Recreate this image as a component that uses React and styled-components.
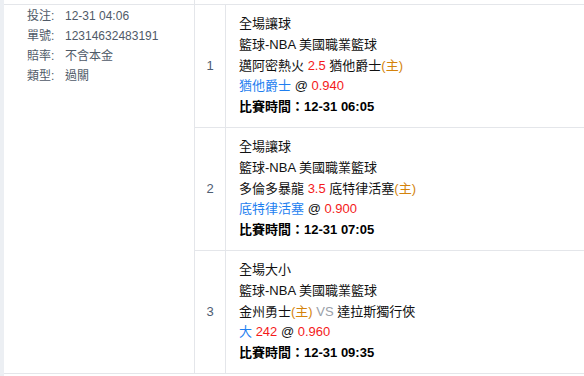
import React from "react";
import styled, { createGlobalStyle } from "styled-components";

const Global = createGlobalStyle`
  html, body { margin: 0; padding: 0; }
  body {
    background: #eceff3;
    font-family: "Liberation Sans", "Noto Sans CJK TC", sans-serif;
  }
`;

const LINE = "#e4e6ea";

const Page = styled.div`
  margin-left: 4px;
  background: #fff;
  min-height: 376px;
`;

const Stub = styled.div`
  display: grid;
  grid-template-columns: 191px 1fr;
  height: 4px;
`;

const StubCell = styled.div`
  border-right: 1px solid ${LINE};
`;

const Table = styled.div`
  display: grid;
  grid-template-columns: 191px 31px 1fr;
  border-top: 1px solid ${LINE};
  border-bottom: 1px solid ${LINE};
`;

const InfoCell = styled.div`
  grid-column: 1;
  grid-row: 1 / span 3;
  box-sizing: border-box;
  border-right: 1px solid ${LINE};
  padding: 1px 0 0 23px;
  font-size: 12px;
  line-height: 20px;
  color: #4f5a68;
`;

const InfoRow = styled.div`
  display: flex;
`;

const InfoLabel = styled.span`
  width: 38px;
  flex: none;
`;

const NumCell = styled.div`
  grid-column: 2;
  box-sizing: border-box;
  border-right: 1px solid ${LINE};
  border-bottom: ${(p) => (p.$last ? "none" : `1px solid ${LINE}`)};
  display: flex;
  align-items: center;
  justify-content: center;
  font-size: 13px;
  color: #4e5d72;
`;

const DetailCell = styled.div`
  grid-column: 3;
  border-bottom: ${(p) => (p.$last ? "none" : `1px solid ${LINE}`)};
  padding: 9px 0 9px 13px;
  font-size: 13px;
  line-height: 20.8px;
  color: #111;
`;

const Line = styled.div`
  white-space: nowrap;
`;

const TimeLine = styled(Line)`
  font-weight: bold;
  color: #000;
`;

const Red = styled.span`
  color: #f41a1a;
`;

const Blue = styled.span`
  color: #1f7ff0;
`;

const Home = styled.span`
  color: #d4830c;
`;

const Vs = styled.span`
  color: #9aa0a8;
`;

const info = [
  ["投注:", "12-31 04:06"],
  ["單號:", "12314632483191"],
  ["賠率:", "不含本金"],
  ["類型:", "過關"],
];

const bets = [
  {
    type: "全場讓球",
    match: (
      <>
        邁阿密熱火 <Red>2.5</Red> 猶他爵士<Home>(主)</Home>
      </>
    ),
    pick: (
      <>
        <Blue>猶他爵士</Blue> @ <Red>0.940</Red>
      </>
    ),
    time: "12-31 06:05",
  },
  {
    type: "全場讓球",
    match: (
      <>
        多倫多暴龍 <Red>3.5</Red> 底特律活塞<Home>(主)</Home>
      </>
    ),
    pick: (
      <>
        <Blue>底特律活塞</Blue> @ <Red>0.900</Red>
      </>
    ),
    time: "12-31 07:05",
  },
  {
    type: "全場大小",
    match: (
      <>
        金州勇士<Home>(主)</Home> <Vs>VS</Vs> 達拉斯獨行俠
      </>
    ),
    pick: (
      <>
        <Blue>大</Blue> <Red>242</Red> @ <Red>0.960</Red>
      </>
    ),
    time: "12-31 09:35",
  },
];

export default function App() {
  return (
    <>
      <Global />
      <Page>
        <Stub>
          <StubCell />
          <div />
        </Stub>
        <Table>
          <InfoCell>
            {info.map(([k, v]) => (
              <InfoRow key={k}>
                <InfoLabel>{k}</InfoLabel>
                <span>{v}</span>
              </InfoRow>
            ))}
          </InfoCell>
          {bets.map((b, i) => {
            const last = i === bets.length - 1;
            return (
              <React.Fragment key={i}>
                <NumCell $last={last} style={{ gridRow: i + 1 }}>
                  {i + 1}
                </NumCell>
                <DetailCell $last={last} style={{ gridRow: i + 1 }}>
                  <Line>{b.type}</Line>
                  <Line>籃球-NBA 美國職業籃球</Line>
                  <Line>{b.match}</Line>
                  <Line>{b.pick}</Line>
                  <TimeLine>比賽時間：{b.time}</TimeLine>
                </DetailCell>
              </React.Fragment>
            );
          })}
        </Table>
      </Page>
    </>
  );
}
